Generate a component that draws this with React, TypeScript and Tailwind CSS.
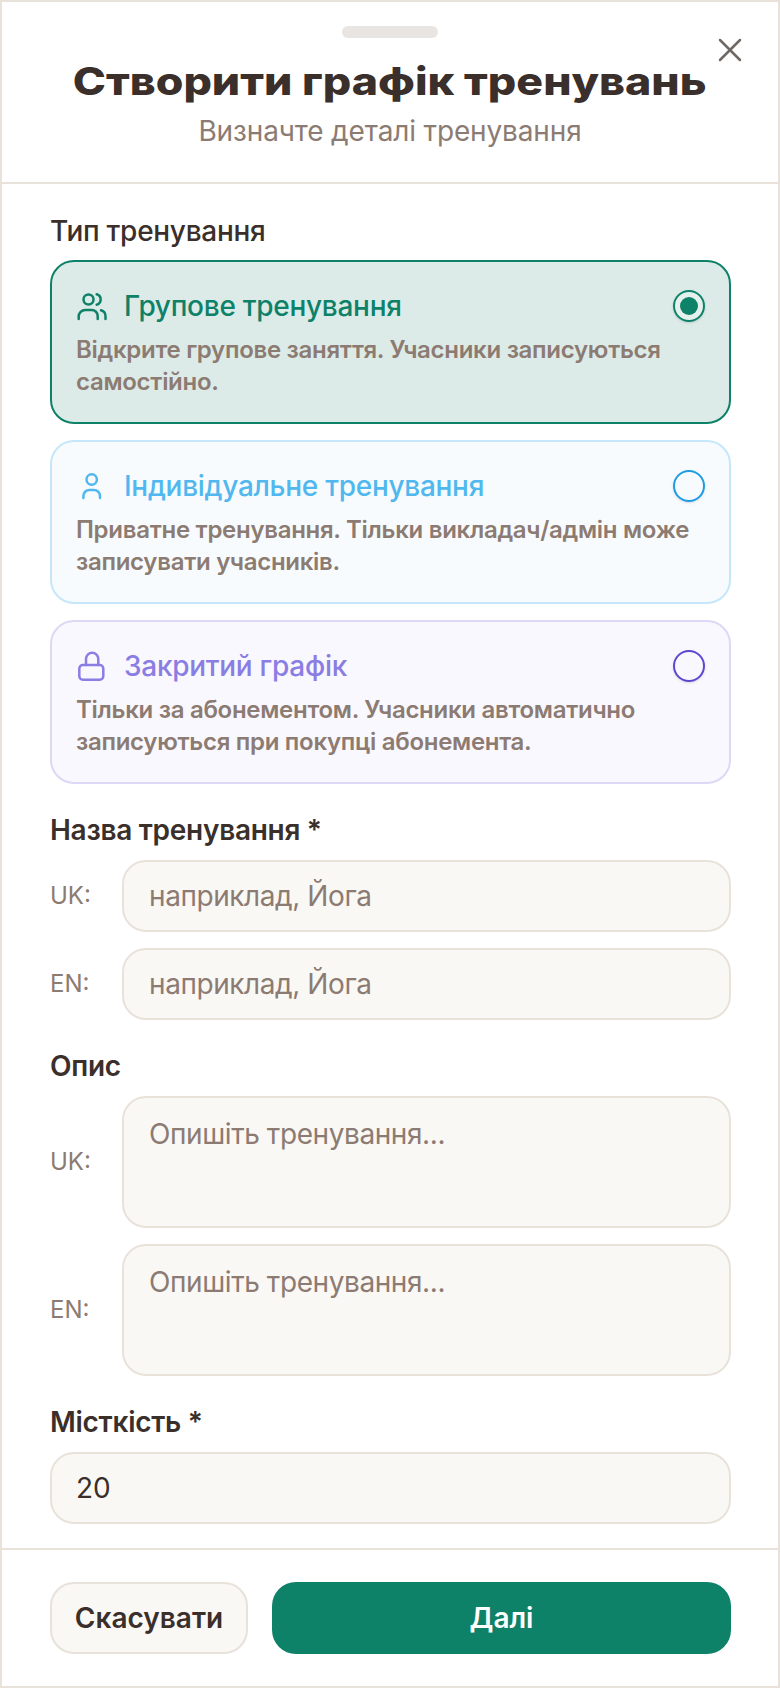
import { X } from "lucide-react";

function GroupIcon({ className }: { className: string }) {
  return (
    <svg width="32" height="32" viewBox="0 0 32 32" fill="none" stroke="currentColor" strokeWidth="2.5" strokeLinecap="round" className={className}>
      <circle cx="12.5" cy="9.5" r="5" />
      <path d="M20.7 4.3a5.4 5.4 0 0 1 0 10.4" />
      <path d="M2.7 29v-2.5a6.5 6.5 0 0 1 6.5-6.5h6.5a6 6 0 0 1 6 6v3" />
      <path d="M25 20.3a6 6 0 0 1 4.5 5.8V29" />
    </svg>
  );
}

function PersonIcon({ className }: { className: string }) {
  return (
    <svg width="32" height="32" viewBox="0 0 32 32" fill="none" stroke="currentColor" strokeWidth="2.5" strokeLinecap="round" className={className}>
      <circle cx="15.7" cy="9.5" r="5.2" />
      <path d="M7.4 28V26a6 6 0 0 1 6-6h4.6a6 6 0 0 1 6 6v2" />
    </svg>
  );
}

function LockIcon({ className }: { className: string }) {
  return (
    <svg width="32" height="32" viewBox="0 0 32 32" fill="none" stroke="currentColor" strokeWidth="2.5" strokeLinecap="round" className={className}>
      <rect x="3.3" y="15" width="24" height="14.7" rx="3.5" />
      <path d="M10 15V8.9a6.15 6.15 0 0 1 12.3 0V15" />
    </svg>
  );
}

const cards = [
  {
    title: "Групове тренування",
    text: "Відкрите групове заняття. Учасники записуються самостійно.",
    icon: GroupIcon,
    box: "border-[#0e8169] bg-[#dcebe7]",
    color: "text-[#0e8169]",
    radio: "border-[#0e8169] bg-white/30",
    selected: true,
  },
  {
    title: "Індивідуальне тренування",
    text: "Приватне тренування. Тільки викладач/адмін може записувати учасників.",
    icon: PersonIcon,
    box: "border-[#c5e7f9] bg-[#f7fbfe]",
    color: "text-[#50b8ee]",
    radio: "border-[#1d9be3]",
    selected: false,
  },
  {
    title: "Закритий графік",
    text: "Тільки за абонементом. Учасники автоматично записуються при покупці абонемента.",
    icon: LockIcon,
    box: "border-[#dcd8f5] bg-[#f9f8fe]",
    color: "text-[#8a7de4]",
    radio: "border-[#5b48d0]",
    selected: false,
  },
];

function Field({ lang, text, tall }: { lang: string; text: string; tall?: boolean }) {
  return (
    <div className="flex items-center">
      <span className="w-[72px] shrink-0 text-[24px] text-[#8c7b72]">{lang}</span>
      <div
        className={
          tall
            ? "h-[132px] flex-1 rounded-[24px] border-2 border-[#e8e2da] bg-[#faf8f5] px-[25px] py-[16px] text-[28px] leading-[40px] tracking-[-0.015em] text-[#8c7b72]"
            : "flex h-[72px] flex-1 items-center rounded-[24px] border-2 border-[#e8e2da] bg-[#faf8f5] px-[25px] text-[28px] tracking-[-0.015em] text-[#8c7b72]"
        }
      >
        {text}
      </div>
    </div>
  );
}

export default function App() {
  return (
    <div
      className="flex h-[1688px] w-[780px] flex-col border-2 border-[#e8e2da] bg-white text-[#3a2f2a]"
      style={{ fontFamily: "Inter, 'Noto Sans', sans-serif" }}
    >
      <header className="relative h-[182px] shrink-0 border-b-2 border-[#e8e2da] pt-[24px] text-center">
        <div className="mx-auto h-[12px] w-[96px] rounded-full bg-[#e8e5e2]" />
        <button className="absolute right-[28px] top-[28px] text-[#6f6863]">
          <X size={40} strokeWidth={1.5} />
        </button>
        <h1 className="mx-auto mt-[19px] w-fit scale-x-[1.175] whitespace-nowrap text-[38px] font-extrabold leading-[48px]">
          Створити графік тренувань
        </h1>
        <p className="mt-[8px] text-[28px] leading-[36px] tracking-[-0.005em] text-[#8c7b72]">Визначте деталі тренування</p>
      </header>

      <main className="flex flex-1 flex-col pl-[48px] pr-[47px] pt-[29px]">
        <label className="text-[28px] font-medium leading-[36px] tracking-[-0.01em]">Тип тренування</label>
        <div className="mt-[11px] flex flex-col gap-[16px]">
          {cards.map((c) => {
            const Icon = c.icon;
            return (
              <div key={c.title} className={`h-[164px] rounded-[24px] border-2 px-[24px] pt-[24px] ${c.box}`}>
                <div className="flex h-[40px] items-center">
                  <Icon className={`shrink-0 ${c.color}`} />
                  <span className={`ml-[16px] flex-1 text-[28px] font-medium tracking-[-0.01em] ${c.color}`}>{c.title}</span>
                  <span className={`flex h-[32px] w-[32px] items-center justify-center rounded-full border-2 shadow-sm ${c.radio}`}>
                    {c.selected && <span className="h-[18px] w-[18px] rounded-full bg-[#0e8169]" />}
                  </span>
                </div>
                <p className="mt-[8px] text-[24px] font-semibold leading-[32px] tracking-[-0.012em] text-[#8c7b72]">{c.text}</p>
              </div>
            );
          })}
        </div>

        <label className="mt-[28px] text-[28px] font-semibold leading-[36px] tracking-[-0.01em]">Назва тренування *</label>
        <div className="mt-[12px] flex flex-col gap-[16px]">
          <Field lang="UK:" text="наприклад, Йога" />
          <Field lang="EN:" text="наприклад, Йога" />
        </div>

        <label className="mt-[28px] text-[28px] font-semibold leading-[36px] tracking-[-0.01em]">Опис</label>
        <div className="mt-[12px] flex flex-col gap-[16px]">
          <Field lang="UK:" text="Опишіть тренування..." tall />
          <Field lang="EN:" text="Опишіть тренування..." tall />
        </div>

        <label className="mt-[28px] text-[28px] font-semibold leading-[36px] tracking-[-0.01em]">Місткість *</label>
        <div className="mt-[12px] flex h-[72px] items-center rounded-[24px] border-2 border-[#e8e2da] bg-[#faf8f5] px-[24px] text-[28px]">
          20
        </div>
      </main>

      <footer className="flex h-[138px] shrink-0 gap-[24px] border-t-2 border-[#e8e2da] pl-[48px] pr-[47px] pt-[32px]">
        <button className="h-[72px] w-[198px] rounded-[24px] border-2 border-[#e8e2da] bg-[#faf8f5] text-[28px] font-semibold">
          Скасувати
        </button>
        <button className="h-[72px] flex-1 rounded-[24px] bg-[#0e8169] text-[28px] font-semibold text-white">Далі</button>
      </footer>
    </div>
  );
}
